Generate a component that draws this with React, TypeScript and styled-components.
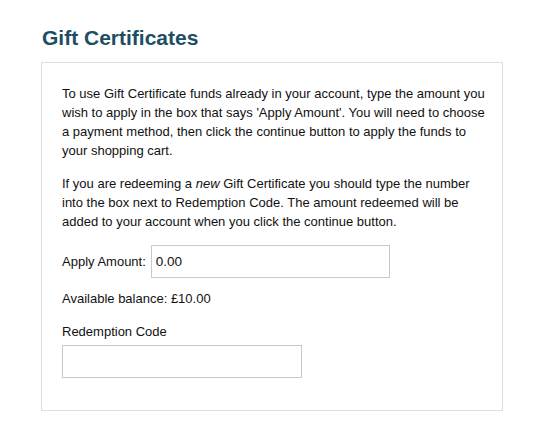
import React from "react";
import styled, { createGlobalStyle } from "styled-components";

const Global = createGlobalStyle`
  html, body { margin: 0; padding: 0; background: #fff; }
  body { font-family: "Liberation Sans", Arial, sans-serif; color: #111; }
`;

const Page = styled.div`
  padding: 26px 35px 0 41px;
  width: 537px;
  box-sizing: border-box;
`;

const Title = styled.h1`
  margin: 0 0 12px 1px;
  font-size: 21px;
  line-height: 24px;
  font-weight: bold;
  color: #1e4e63;
`;

const Panel = styled.div`
  border: 1px solid #dedede;
  padding: 21px 12px 32px 20px;
  box-sizing: border-box;
  width: 462px;
`;

const Para = styled.p`
  margin: 0 0 14px 0;
  font-size: 13px;
  line-height: 19px;
`;

const Row = styled.div`
  display: flex;
  align-items: center;
  gap: 5px;
  margin-bottom: 11px;
`;

const Label = styled.label`
  font-size: 13px;
  line-height: 19px;
`;

const Balance = styled.div`
  font-size: 13px;
  line-height: 19px;
  margin-bottom: 14px;
`;

const Field = styled.div`
  display: flex;
  flex-direction: column;
  gap: 4px;
`;

const Input = styled.input<{ $w: number }>`
  width: ${(p) => p.$w}px;
  height: 33px;
  box-sizing: border-box;
  border: 1px solid #c8c8c8;
  padding: 0 4px;
  font-family: "Liberation Sans", Arial, sans-serif;
  font-size: 13.5px;
  color: #111;
  outline: none;
  background: #fff;
`;

export default function App() {
  return (
    <>
      <Global />
      <Page>
        <Title>Gift Certificates</Title>
        <Panel>
          <Para>
            To use Gift Certificate funds already in your account, type the amount you wish to apply in the box that says 'Apply Amount'. You will need to choose a payment method, then click the continue button to apply the funds to your shopping cart.
          </Para>
          <Para>
            If you are redeeming a <em>new</em> Gift Certificate you should type the number into the box next to Redemption Code. The amount redeemed will be added to your account when you click the continue button.
          </Para>
          <Row>
            <Label>Apply Amount:</Label>
            <Input $w={239} defaultValue="0.00" />
          </Row>
          <Balance>Available balance: £10.00</Balance>
          <Field>
            <Label>Redemption Code</Label>
            <Input $w={240} />
          </Field>
        </Panel>
      </Page>
    </>
  );
}
